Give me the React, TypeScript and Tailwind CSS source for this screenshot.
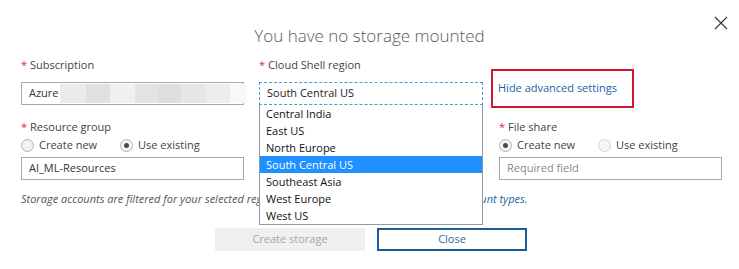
import React from "react";

const regions = [
  "Central India",
  "East US",
  "North Europe",
  "South Central US",
  "Southeast Asia",
  "West Europe",
  "West US",
];

const blur = [
  "w-[26px] bg-[#ebebeb]",
  "w-[24px] bg-[#e0e0e0]",
  "w-[25px] bg-[#f0f0f0]",
  "w-[23px] bg-[#e3e3e3]",
  "w-[23px] bg-[#dedede]",
  "w-[25px] bg-[#e6e6e6]",
  "w-[24px] bg-[#ececec]",
  "w-[16px] bg-[#f8f8f8]",
];

const Label: React.FC<{ text: string }> = ({ text }) => (
  <div className="h-[14px] leading-[14px] text-[#444]">
    <span className="text-[#e0283c] mr-[3px]">*</span>
    {text}
  </div>
);

const Radio: React.FC<{ checked?: boolean; faded?: boolean; label: string; wide?: boolean }> = ({
  checked,
  faded,
  label,
  wide,
}) => (
  <div className={`flex items-center gap-[5px] ${wide ? "w-[99px]" : ""}`}>
    <span
      className={`w-[13px] h-[13px] rounded-full border flex items-center justify-center ${
        faded ? "border-[#d4d4d4] bg-[#f6f6f6]" : "border-[#b4b4b4] bg-[#f2f2f2]"
      }`}
    >
      {checked && <span className="w-[5px] h-[5px] rounded-full bg-[#4a4a4a]" />}
    </span>
    <span className="text-[#444]">{label}</span>
  </div>
);

const App: React.FC = () => {
  return (
    <div className="relative w-[739px] h-[269px] bg-white overflow-hidden font-['Open_Sans',sans-serif] text-[11px]">
      {/* close */}
      <svg
        className="absolute left-[714px] top-[16px]"
        width="14"
        height="14"
        viewBox="0 0 14 14"
      >
        <path d="M1 1 L13 13 M13 1 L1 13" stroke="#333" strokeWidth="1.1" />
      </svg>

      <h1 className="pt-[26px] text-center text-[17px] leading-[20px] font-light text-[#5a5a5a]">
        You have no storage mounted
      </h1>

      <div className="grid grid-cols-[223px_223px_223px] gap-x-[16px] pl-[21px] mt-[12px]">
        {/* row 1 */}
        <div>
          <Label text="Subscription" />
          <div className="mt-[10px] h-[23px] border border-[#a9a9a9] flex items-center pl-[7px] text-[#333]">
            <span>Azure</span>
            <div className="flex h-[19px] ml-[1px]">
              {blur.map((b, i) => (
                <div key={i} className={b} />
              ))}
            </div>
          </div>
        </div>

        <div className="-ml-[1px]">
          <Label text="Cloud Shell region" />
          <div className="relative mt-[10px]">
            <div className="h-[23px] border border-dashed border-[#4d9ec4] flex items-center pl-[7px] text-[#222]">
              South Central US
            </div>
            <ul className="absolute z-10 left-0 top-full w-full bg-white border border-t-0 border-[#8c9cae]">
              {regions.map((r) => (
                <li
                  key={r}
                  className={`h-[17px] leading-[17px] pl-[6px] ${
                    r === "South Central US" ? "bg-[#1e90ff] text-white" : "text-[#111]"
                  }`}
                >
                  {r}
                </li>
              ))}
            </ul>
          </div>
        </div>

        <div className="h-[47px] pt-[11px]">
          <div className="-ml-[8px] w-[143px] h-[39px] border-2 border-[#d1172e] flex items-center pl-[5px] pb-[1px] text-[#1d5fa6]">
            Hide advanced settings
          </div>
        </div>

        {/* row 2 */}
        <div className="mt-[15px]">
          <Label text="Resource group" />
          <div className="flex mt-[3px] h-[16px]">
            <Radio label="Create new" wide />
            <Radio label="Use existing" checked />
          </div>
          <div className="mt-[4px] h-[23px] border border-[#a9a9a9] flex items-center pl-[7px] text-[#333]">
            AI_ML-Resources
          </div>
        </div>

        <div />

        <div className="mt-[15px]">
          <Label text="File share" />
          <div className="flex mt-[3px] h-[16px]">
            <Radio label="Create new" wide checked />
            <Radio label="Use existing" faded />
          </div>
          <div className="mt-[4px] h-[23px] border border-[#a9a9a9] flex items-center pl-[7px] text-[#888]">
            Required field
          </div>
        </div>
      </div>

      <p className="pl-[21px] mt-[12px] h-[14px] leading-[14px] italic text-[#555]">
        Storage accounts are filtered for your selected region and subscription.{" "}
        <span className="text-[#1d5fa6]">Learn more about account types.</span>
      </p>

      <div className="flex justify-center gap-[12px] mt-[22px] pl-[3px]">
        <button className="w-[150px] h-[23px] bg-[#f0f0f0] text-[#a6a6a6]">Create storage</button>
        <button className="w-[150px] h-[23px] border-2 border-[#1f5b94] text-[#2f6aa6]">Close</button>
      </div>
    </div>
  );
};

export default App;
